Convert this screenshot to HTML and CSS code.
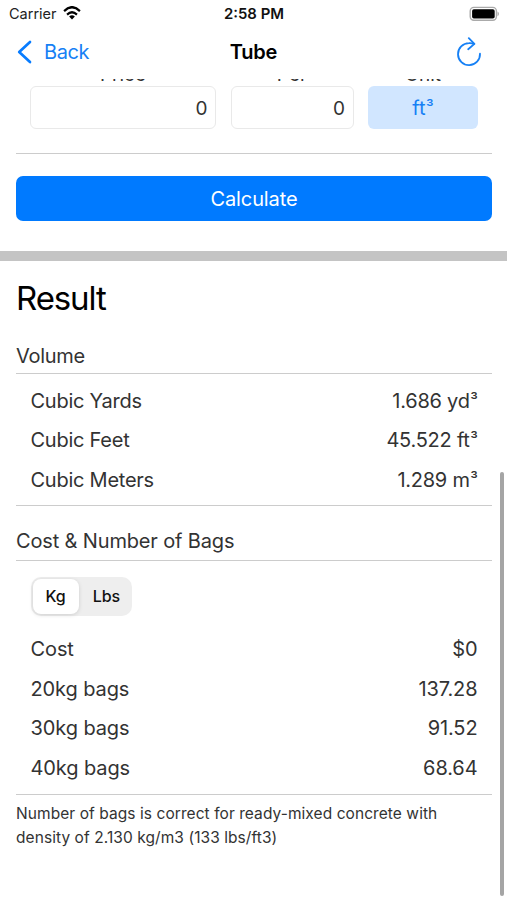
FILE: index.html
```html
<!DOCTYPE html>
<html lang="en">
<head>
<meta charset="utf-8">
<title>Tube</title>
<link rel="stylesheet" href="styles.css">
</head>
<body>
<div class="screen">
  <header class="top">
    <div class="status">
      <div class="carrier"><span class="carrier-name">Carrier</span>
        <svg class="wifi" width="18" height="14" viewBox="0 0 20 14" preserveAspectRatio="none" fill="none" stroke="#000" stroke-width="2.5"><path d="M1.2 5.1Q10-2.6 18.8 5.1"/><path d="M4.5 8.6Q10 3.9 15.5 8.6"/><path d="M10 13.6 6.8 10.5Q10 8 13.2 10.5Z" fill="#000" stroke="none"/></svg>
      </div>
      <div class="time"><span class="time-text">2:58 PM</span></div>
      <svg class="battery" width="31" height="16" viewBox="0 0 31 16"><rect x="2.2" y="1.4" width="26.2" height="12.8" rx="3.6" fill="#fff" stroke="#aaa" stroke-width="1.4"/><rect x="4.1" y="3.2" width="22.6" height="9.4" rx="1.8"/><path d="M29.5 5.4Q31 6 31 7.8T29.5 10.2Z" fill="#aaa"/></svg>
    </div>
    <nav class="nav">
      <div class="back"><svg width="16" height="24" viewBox="0 0 16 24" fill="none" stroke="#087cff" stroke-width="2.7" stroke-linecap="round" stroke-linejoin="round"><path d="M14 2 3.2 12 14 22"/></svg><span class="back-text">Back</span></div>
      <div class="title"><span class="title-text">Tube</span></div>
      <svg class="reload" width="26" height="30" viewBox="0 0 26 30" fill="none" stroke="#1680f5" stroke-width="1.8" stroke-linecap="round" stroke-linejoin="round"><path d="M24 16.7A11 11 0 1 1 13 6.2Q15.5 6 18 6.9"/><path d="M12.8 1.2 18.4 6.9 12.2 12.2"/></svg>
    </nav>
  </header>
  <main class="content">
    <section class="form">
      <div class="labels"><span>Price</span><span>Per</span><span>Unit</span></div>
      <div class="fields"><div class="field">0</div><div class="field">0</div><div class="unit"><span>ft<span class="cube">³</span></span></div></div>
      <div class="calc"><span class="calc-text">Calculate</span></div>
    </section>
    <section class="results">
      <h1><span>Result</span></h1>
      <h2><span class="h-volume">Volume</span></h2>
      <div class="rows">
        <div class="row"><span>Cubic Yards</span><span>1.686 yd<span class="cube">³</span></span></div>
        <div class="row"><span>Cubic Feet</span><span>45.522 ft<span class="cube">³</span></span></div>
        <div class="row"><span>Cubic Meters</span><span>1.289 m<span class="cube">³</span></span></div>
      </div>
      <h2 class="second"><span>Cost &amp; Number of Bags</span></h2>
      <div class="rows costs">
        <div class="segment"><span class="selected">Kg</span><span class="option">Lbs</span></div>
        <div class="row"><span>Cost</span><span>$0</span></div>
        <div class="row"><span>20kg bags</span><span>137.28</span></div>
        <div class="row"><span>30kg bags</span><span>91.52</span></div>
        <div class="row"><span>40kg bags</span><span>68.64</span></div>
      </div>
      <p>Number of bags is correct for ready-mixed concrete with<br>density of 2.130 kg/m3 (133 lbs/ft3)</p>
    </section>
  </main>
  <div class="scrollbar"></div>
</div>
</body>
</html>
```

FILE: styles.css
```css
* { box-sizing: border-box; }
body { margin: 0; background: #fff; color: #333; font-family: Inter, "Liberation Sans", sans-serif; font-size: 20px; }
.screen { position: relative; width: 507px; height: 900px; overflow: hidden; display: flex; flex-direction: column; }
.top { height: 79px; flex: none; }
.status { height: 27px; display: grid; grid-template-columns: 1fr 100px 1fr; align-items: center; padding: 0 8px 0 9px; font-size: 14.5px; color: #222; }
.carrier { display: flex; align-items: center; gap: 6px; }
.wifi { margin-top: -1px; }
.time { text-align: center; font-size: 14.9px; font-weight: 600; color: #111; }
.battery { justify-self: end; }
.nav { height: 52px; display: grid; grid-template-columns: 1fr 100px 1fr; align-items: center; padding: 0 25px 2px 16px; }
.back { display: flex; align-items: center; gap: 12px; color: #1680f5; letter-spacing: -.4px; }
.title { text-align: center; font-weight: 600; color: #000; padding-left: 9px; letter-spacing: -.2px; }
.reload { justify-self: end; }
.content { flex: 1; overflow: hidden; }
.form { display: flow-root; height: 182px; padding: 0 15px 0 16px; border-bottom: 10px solid #c4c4c4; }
.labels, .fields { display: grid; grid-template-columns: 186px 123px 110px; column-gap: 14.5px; padding: 0 14px; }
.labels { height: 24px; margin-top: -17px; line-height: 25px; text-align: center; font-size: 19px; }
.fields { height: 68px; padding-bottom: 24px; border-bottom: 1.5px solid #ccc; }
.field, .unit { height: 43px; border-radius: 6px; display: flex; align-items: center; }
.field { border: 1px solid #e9e9e9; justify-content: flex-end; padding: 1px 7.5px 0 0; font-size: 19px; }
.unit { background: #d1e6ff; color: #1680f5; justify-content: center; }
.cube { font-size: 17px; line-height: 1; vertical-align: 1px; margin-left: .5px; }
.calc { height: 45px; margin-top: 22px; border-radius: 7px; background: #007aff; color: #fff; display: flex; align-items: center; justify-content: center; letter-spacing: -.1px; }
.results { padding: 0 15px 0 16px; }
h1 { margin: 0; height: 76px; line-height: 75px; font-size: 33px; font-weight: 400; color: #000; letter-spacing: -1.1px; }
h2 { margin: 0; height: 37px; line-height: 39px; border-bottom: 1.5px solid #ccc; font-size: 20px; font-weight: 400; letter-spacing: -.3px; }
.rows { padding: 7.5px 14.5px 5px; border-bottom: 1.5px solid #ccc; letter-spacing: -.25px; }
.row { height: 39.5px; line-height: 39.5px; display: flex; justify-content: space-between; }
.second { height: 55px; line-height: 71px; letter-spacing: -.15px; }
.costs { padding-top: 16px; padding-bottom: 5.5px; letter-spacing: -.1px; }
.segment { width: 101px; height: 39px; margin-bottom: 14px; border-radius: 10px; background: #eee; padding: 2px; display: flex; font-size: 16px; font-weight: 500; line-height: 35px; text-align: center; color: #111; letter-spacing: -.1px; }
.selected { width: 46px; border-radius: 8px; background: #fff; box-shadow: 0 1px 4px #0002; }
.option { flex: 1; padding-left: 5px; }
p { margin: 7px 0 0; font-size: 15.5px; line-height: 24px; letter-spacing: .07px; }
.scrollbar { position: absolute; left: 499.5px; top: 472px; width: 4px; height: 424px; border-radius: 2px; background: #a5a5a5; }
```
